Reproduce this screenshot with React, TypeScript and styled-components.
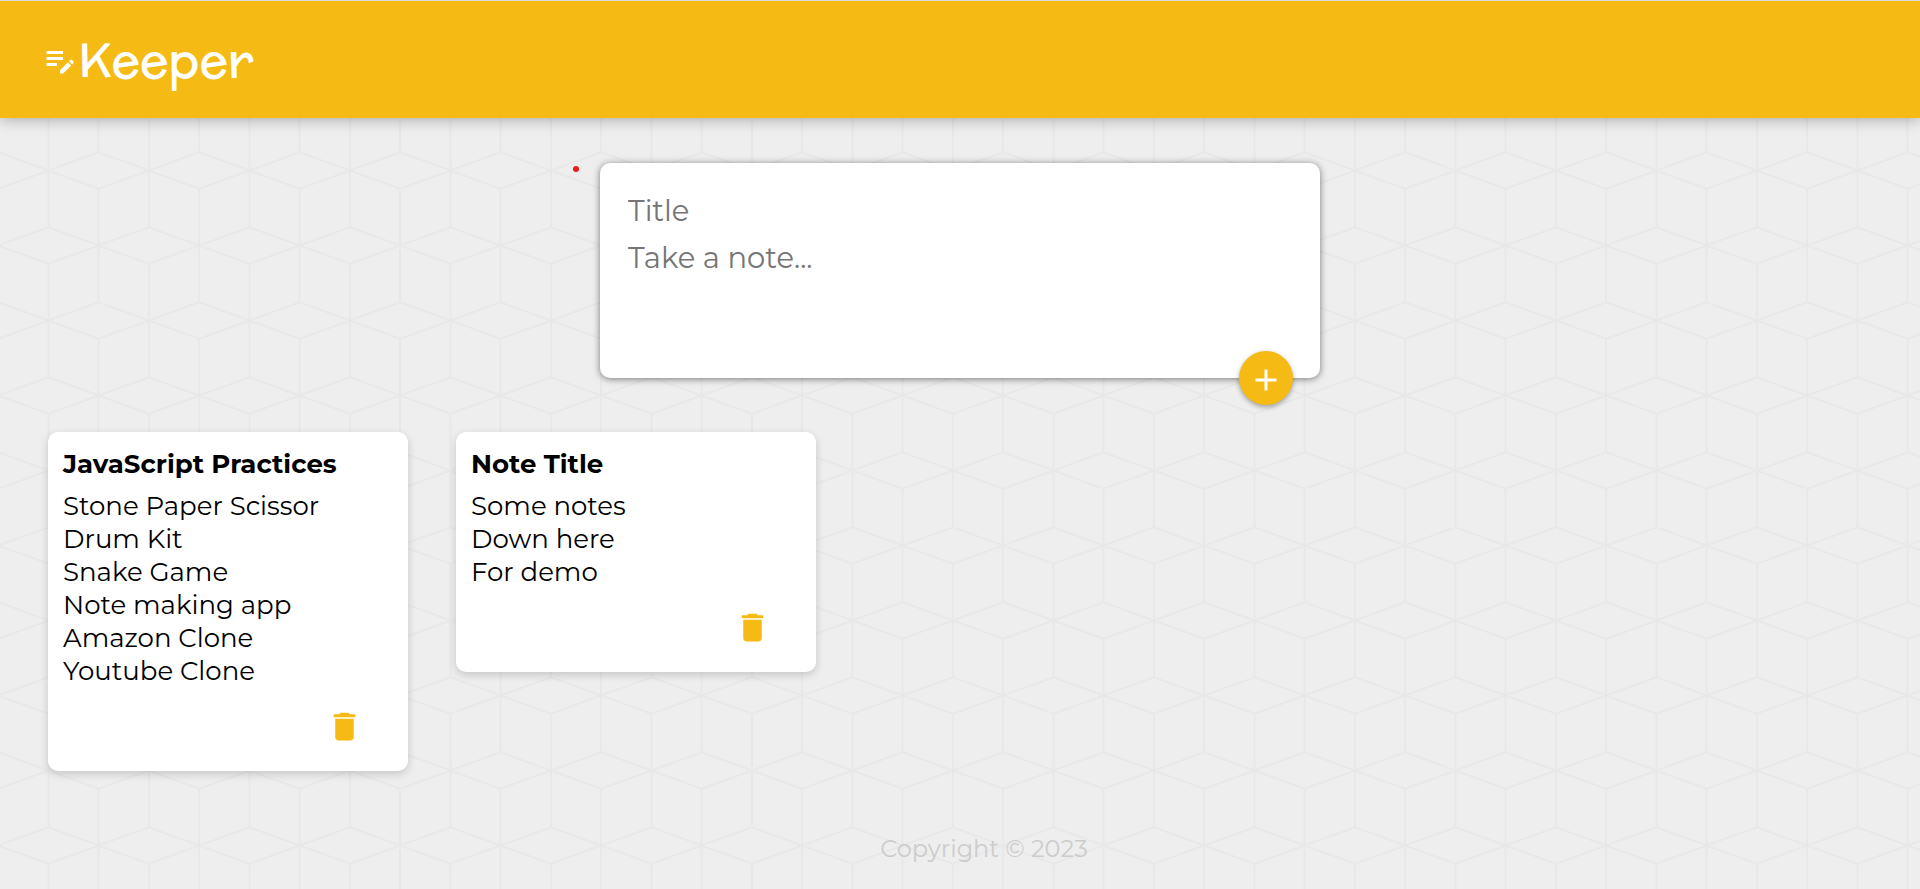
import React, { useState } from "react";
import styled, { createGlobalStyle } from "styled-components";

const accent = "#f5ba13";

/* Cube lattice: two columns of cubes per tile */
const latticeTile = `<svg xmlns="http://www.w3.org/2000/svg" width="201" height="150" viewBox="0 0 201 150"><g fill="none" stroke="#e8e8e8" stroke-width="2"><path d="M-52 20.5L-2 2.2L48.5 20.5L98.5 2.2L149 20.5L199 2.2L249 20.5"/><path d="M-52 20.5L-2 38.8L48.5 20.5L98.5 38.8L149 20.5L199 38.8L249 20.5"/><path d="M-2 95.5L48.5 77.2L98.5 95.5L149 77.2L199 95.5L249 77.2"/><path d="M-2 95.5L48.5 113.8L98.5 95.5L149 113.8L199 95.5L249 113.8"/><path d="M48.5 0V77M48.5 114V150M149 0V77M149 114V150M98.5 0V2M98.5 39V150M199 0V2M199 39V150"/></g></svg>`;

const GlobalStyle = createGlobalStyle`
  *, *::before, *::after { box-sizing: border-box; }
  html { font-family: Montserrat, Inter, "Open Sans", sans-serif; }
  body {
    margin: 0;
    color: #000;
    background: #eee url('data:image/svg+xml,${encodeURIComponent(latticeTile)}') 0 0 / 201px 150px;
  }
`;

const Page = styled.div`
  display: flex;
  flex-direction: column;
  min-height: 100vh;
`;

const Header = styled.header`
  display: flex;
  align-items: center;
  height: 118px;
  padding: 0 42px;
  border-top: 1px solid #d8dadc;
  background: ${accent};
  box-shadow: 0 0 15px rgba(0, 0, 0, 0.35);
`;

const Brand = styled.h1`
  display: flex;
  align-items: center;
  margin: 0;
  color: #fff;
  font: 400 48px/60px McLaren, Inter, sans-serif;
`;

const Icon = styled.svg<{ $size: number }>`
  display: block;
  width: ${(p) => p.$size}px;
  height: ${(p) => p.$size}px;
  fill: currentColor;
`;

const Main = styled.main`
  flex: 1;
  padding: 45px 48px 0;
`;

const NoteForm = styled.form`
  position: relative;
  display: flex;
  flex-direction: column;
  max-width: 720px;
  height: 215px;
  margin: 0 auto 54px;
  padding: 24px 28px;
  border-radius: 10px;
  background: #fff;
  box-shadow: 0 1px 7px rgba(0, 0, 0, 0.5);
`;

const Marker = styled.span`
  position: absolute;
  top: 3px;
  left: -27px;
  width: 6px;
  height: 6px;
  border-radius: 50%;
  background: #e91b1b;
`;

const fieldStyle = `
  width: 100%;
  padding: 0;
  border: 0;
  outline: 0;
  background: transparent;
  font-family: inherit;
  font-weight: 400;
  font-size: 29px;
  line-height: 47px;
  &::placeholder { color: #757575; opacity: 1; }
`;

const TitleField = styled.input`
  ${fieldStyle}
  height: 47px;
`;

const ContentField = styled.textarea`
  ${fieldStyle}
  flex: 1;
  resize: none;
`;

const AddButton = styled.button`
  position: absolute;
  right: 27px;
  bottom: -27px;
  display: grid;
  place-items: center;
  width: 54px;
  height: 54px;
  padding: 4px 0 0;
  border: 0;
  border-radius: 50%;
  color: #fff;
  background: ${accent};
  box-shadow: 0 2px 5px rgba(0, 0, 0, 0.35);
  cursor: pointer;
`;

const NoteList = styled.section`
  display: flex;
  flex-wrap: wrap;
  align-items: flex-start;
  gap: 48px;
`;

const Card = styled.article`
  display: flex;
  flex-direction: column;
  width: 360px;
  padding: 16px 15px;
  border-radius: 10px;
  background: #fff;
  box-shadow: 0 3px 8px rgba(0, 0, 0, 0.17);
`;

const CardTitle = styled.h2`
  margin: 0 0 9px;
  font-weight: 700;
  font-size: 26px;
  line-height: 33px;
`;

const CardText = styled.p`
  margin: 0 0 20px;
  font-weight: 400;
  font-size: 26px;
  line-height: 33px;
  white-space: pre-line;
`;

const DeleteButton = styled.button`
  align-self: flex-end;
  margin: 0 30px 10px 0;
  padding: 0;
  border: 0;
  color: ${accent};
  background: none;
  cursor: pointer;
`;

const Footer = styled.footer`
  padding: 0 0 24px 48px;
  color: #ccc;
  font-size: 24px;
  line-height: 32px;
  text-align: center;
`;

type Note = { title: string; content: string };

const initialNotes: Note[] = [
  {
    title: "JavaScript Practices",
    content:
      "Stone Paper Scissor\nDrum Kit\nSnake Game\nNote making app\nAmazon Clone\nYoutube Clone",
  },
  { title: "Note Title", content: "Some notes\nDown here\nFor demo" },
];

const EditNoteIcon = () => (
  <Icon $size={36} viewBox="0 0 24 24" aria-hidden="true">
    <path d="M3 10h11v2H3v-2zm0-2h11V6H3v2zm0 8h7v-2H3v2zm15.01-3.13.71-.71c.39-.39 1.02-.39 1.41 0l.71.71c.39.39.39 1.02 0 1.41l-.71.71-2.12-2.12zm-.71.71-5.3 5.3V21h2.12l5.3-5.3-2.12-2.12z" />
  </Icon>
);

const AddIcon = () => (
  <Icon $size={36} viewBox="0 0 24 24" aria-hidden="true">
    <path d="M19 13h-6v6h-2v-6H5v-2h6V5h2v6h6v2z" />
  </Icon>
);

const DeleteIcon = () => (
  <Icon $size={37} viewBox="0 0 24 24" aria-hidden="true">
    <path d="M6 19c0 1.100.9 2 2 2h8c1.100 0 2-.9 2-2V7H6v12zM19 4h-3.500l-1-1h-5l-1 1H5v2h14V4z" />
  </Icon>
);

export default function App() {
  const [notes, setNotes] = useState(initialNotes);
  const [draft, setDraft] = useState<Note>({ title: "", content: "" });

  const addNote = (event: React.FormEvent) => {
    event.preventDefault();
    if (!draft.title && !draft.content) return;
    setNotes([...notes, draft]);
    setDraft({ title: "", content: "" });
  };

  return (
    <Page>
      <GlobalStyle />
      <Header>
        <Brand>
          <EditNoteIcon />
          Keeper
        </Brand>
      </Header>
      <Main>
        <NoteForm onSubmit={addNote}>
          <Marker />
          <TitleField
            aria-label="Title"
            placeholder="Title"
            value={draft.title}
            onChange={(e) => setDraft({ ...draft, title: e.target.value })}
          />
          <ContentField
            aria-label="Note"
            placeholder="Take a note..."
            value={draft.content}
            onChange={(e) => setDraft({ ...draft, content: e.target.value })}
          />
          <AddButton type="submit" aria-label="Add note">
            <AddIcon />
          </AddButton>
        </NoteForm>
        <NoteList>
          {notes.map((note, index) => (
            <Card key={index}>
              <CardTitle>{note.title}</CardTitle>
              <CardText>{note.content}</CardText>
              <DeleteButton
                type="button"
                aria-label={`Delete ${note.title}`}
                onClick={() => setNotes(notes.filter((_, i) => i !== index))}
              >
                <DeleteIcon />
              </DeleteButton>
            </Card>
          ))}
        </NoteList>
      </Main>
      <Footer>Copyright © 2023</Footer>
    </Page>
  );
}
